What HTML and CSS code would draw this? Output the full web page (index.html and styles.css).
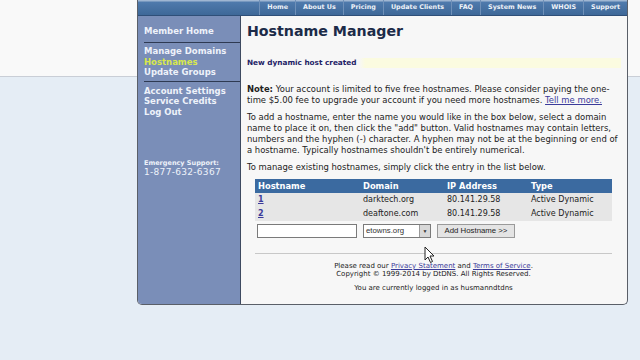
FILE: index.html
```html
<!DOCTYPE html>
<html>
<head>
    <title>Hostname Manager</title>
    <link rel="stylesheet" href="styles.css">
</head>
<body>
    <div class="band"></div>
    <div class="page">
        <div class="topnav">
            <a href="#">Home</a>
            <a href="#">About Us</a>
            <a href="#">Pricing</a>
            <a href="#">Update Clients</a>
            <a href="#">FAQ</a>
            <a href="#">System News</a>
            <a href="#">WHOIS</a>
            <a href="#">Support</a>
        </div>
        <div class="main">
            <div class="sidebar">
                <div class="side-group first">
                    <a href="#">Member Home</a>
                </div>
                <div class="side-group">
                    <a href="#">Manage Domains</a>
                    <a href="#" class="current">Hostnames</a>
                    <a href="#">Update Groups</a>
                </div>
                <div class="side-group last">
                    <a href="#">Account Settings</a>
                    <a href="#">Service Credits</a>
                    <a href="#">Log Out</a>
                </div>
                <div class="support">
                    <div class="support-label">Emergency Support:</div>
                    <div class="support-phone">1-877-632-6367</div>
                </div>
            </div>
            <div class="content">
                <h1>Hostname Manager</h1>
                <div class="notice">New dynamic host created</div>
                <p><b>Note:</b> Your account is limited to five free hostnames. Please consider paying the one-time $5.00 fee to upgrade your account if you need more hostnames. <a href="#">Tell me more.</a></p>
                <p>To add a hostname, enter the name you would like in the box below, select a domain name to place it on, then click the "add" button. Valid hostnames may contain letters, numbers and the hyphen (-) character. A hyphen may not be at the beginning or end of a hostname. Typically hostnames shouldn't be entirely numerical.</p>
                <p>To manage existing hostnames, simply click the entry in the list below.</p>
                <table class="hosts">
                    <tr>
                        <th class="col-host">Hostname</th>
                        <th class="col-domain">Domain</th>
                        <th class="col-ip">IP Address</th>
                        <th>Type</th>
                    </tr>
                    <tr class="row">
                        <td><a href="#">1</a></td>
                        <td>darktech.org</td>
                        <td>80.141.29.58</td>
                        <td>Active Dynamic</td>
                    </tr>
                    <tr class="row">
                        <td><a href="#">2</a></td>
                        <td>deaftone.com</td>
                        <td>80.141.29.58</td>
                        <td>Active Dynamic</td>
                    </tr>
                    <tr>
                        <td><input type="text" class="host-input"></td>
                        <td colspan="3">
                            <div class="add-row">
                                <div class="select">
                                    <span>etowns.org</span>
                                    <span class="select-btn">&#9660;</span>
                                </div>
                                <button type="button" class="add-btn">Add Hostname &gt;&gt;</button>
                            </div>
                        </td>
                    </tr>
                </table>
                <div class="footer">
                    <div>Please read our <a href="#">Privacy Statement</a> and <a href="#">Terms of Service</a>.</div>
                    <div>Copyright &copy; 1999-2014 by DtDNS. All Rights Reserved.</div>
                    <div class="logged">You are currently logged in as husmanndtdns</div>
                </div>
                <svg class="cursor" width="12" height="18" viewBox="0 0 12 18">
                    <path d="M1 1 L1 14 L4 11 L6.5 16.5 L8.5 15.5 L6 10 L10 10 Z" fill="#fff" stroke="#222" stroke-width="1"/>
                </svg>
            </div>
        </div>
    </div>
</body>
</html>
```

FILE: styles.css
```css
body {
    margin: 0;
    background: #e5edf5;
    font-family: "DejaVu Sans", Verdana, sans-serif;
    position: relative;
}

.band {
    position: absolute;
    left: 0;
    top: 0;
    width: 100%;
    height: 76px;
    background: #f9f9f9;
    border-bottom: 1px solid #c9ced6;
}

.page {
    position: relative;
    width: 489px;
    margin-left: 137px;
    border: 1px solid #5a5f68;
    border-top: none;
    border-radius: 0 0 5px 5px;
    overflow: hidden;
    background: #f7f7f7;
}

.topnav {
    display: flex;
    justify-content: flex-end;
    height: 15px;
    background: linear-gradient(#9fb6d2 0, #9fb6d2 1px, #4f7aac 2px, #3e6898 100%);
    border-bottom: 1px solid #2f4f78;
}

.topnav a {
    color: #eef2f8;
    font-size: 6.4px;
    font-weight: bold;
    text-decoration: none;
    line-height: 15px;
    padding: 0 7px;
    border-left: 1px solid #6f90b8;
}

.main {
    display: flex;
    height: 288px;
}

.sidebar {
    width: 103px;
    background: #7a8eb8;
    border-right: 1px solid #3e4a60;
    padding-left: 6px;
    box-sizing: border-box;
}

.side-group {
    border-bottom: 1px solid #2e3a52;
    padding: 3px 0 4px;
}

.side-group.first {
    padding: 10px 0 6px;
}

.side-group.last {
    border-bottom: none;
    padding-top: 4px;
}

.side-group a {
    display: block;
    color: #eef2fa;
    font-size: 8.5px;
    font-weight: bold;
    text-decoration: none;
    line-height: 10.3px;
}

.side-group a.current {
    color: #d8e84c;
}

.support {
    margin-top: 38px;
    color: #eef2fa;
}

.support-label {
    font-size: 6.5px;
    font-weight: bold;
    line-height: 8px;
}

.support-phone {
    font-size: 9px;
    letter-spacing: 0.3px;
    line-height: 11px;
}

.content {
    flex: 1;
    position: relative;
    padding: 5px 6px 0 6px;
    color: #222;
    font-size: 8.45px;
    line-height: 10.7px;
}

h1 {
    margin: 0;
    font-size: 14.2px;
    line-height: 20px;
    color: #1c2b48;
}

.notice {
    margin-top: 17px;
    font-size: 7.3px;
    font-weight: bold;
    color: #1e2266;
    line-height: 10px;
    background: linear-gradient(to right, #f7f7f7 0, #f7f7f7 112px, #fbfbe0 118px, #fbfbe0 100%);
}

p {
    margin: 7px 0 0;
}

.notice + p {
    margin-top: 16px;
}

a {
    color: #3b3b9a;
}

.hosts {
    margin: 6px 0 0 8px;
    width: 357px;
    border-collapse: collapse;
    font-size: 8px;
    line-height: 10px;
}

.hosts th {
    background: #3b6aa0;
    color: #fff;
    text-align: left;
    font-weight: bold;
    font-size: 8.3px;
    height: 14px;
    padding: 0 3px;
}

.hosts td {
    padding: 0 3px;
    height: 14px;
}

.hosts .row td {
    background: #e6e6e6;
}

.hosts .row a {
    font-weight: bold;
}

.col-host {
    width: 98px;
}

.col-domain {
    width: 78px;
}

.col-ip {
    width: 78px;
}

.host-input {
    display: block;
    width: 100px;
    height: 14px;
    box-sizing: border-box;
    margin: 3px 0 0 -1px;
    border: 1px solid #7a7a7a;
    background: #fff;
}

.add-row {
    display: flex;
    align-items: center;
    gap: 6px;
    margin-top: 3px;
}

.select {
    display: flex;
    justify-content: space-between;
    align-items: center;
    width: 68px;
    height: 14px;
    box-sizing: border-box;
    border: 1px solid #7a7a7a;
    background: #fff;
    font-family: "Liberation Sans", Arial, sans-serif;
    font-size: 7.8px;
    color: #333;
    padding-left: 2px;
}

.select-btn {
    width: 10px;
    height: 12px;
    background: #d8d8d8;
    border-left: 1px solid #999;
    font-size: 5px;
    text-align: center;
    line-height: 12px;
}

.add-btn {
    width: 78px;
    height: 14px;
    padding: 0;
    background: #e4e4e4;
    border: 1px solid #9a9a9a;
    font-family: "Liberation Sans", Arial, sans-serif;
    font-size: 7.8px;
    color: #222;
}

.footer {
    margin: 15px 0 0 8px;
    width: 357px;
    border-top: 1px solid #c8c8c8;
    padding-top: 8px;
    text-align: center;
    font-size: 7px;
    line-height: 8px;
}

.footer .logged {
    margin-top: 6px;
}

.cursor {
    position: absolute;
    left: 183px;
    top: 230px;
}
```
